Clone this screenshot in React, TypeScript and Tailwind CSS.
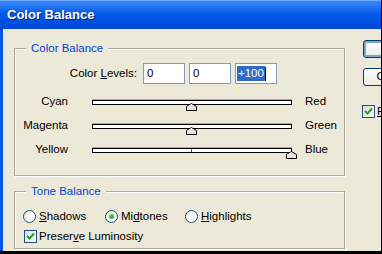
import React from 'react';

const sans = "font-['Liberation_Sans',Arial,sans-serif]";

interface SliderRowProps {
    left: string;
    right: string;
    value: number;
    tick?: boolean;
}

// thumb position is given in px from the left end of the track (0..200)
function SliderRow({ left, right, value, tick }: SliderRowProps) {
    return (
        <div className="flex items-center h-[24px]">
            <div className="w-[53px] text-right">{left}</div>
            <div className="relative ml-[24px] w-[200px] h-[5px] bg-white border border-black shadow-[0_-1px_0_#ACA899]">
                {tick && <div className="absolute left-[98px] top-0 w-px h-[3px] bg-[#555]" />}
                <svg
                    className="absolute top-[2px]"
                    style={{ left: value - 6 }}
                    width="11"
                    height="8"
                    viewBox="0 0 11 8">
                    <path d="M0.5 7.5 V3.5 L5.5 0.5 L10.5 3.5 V7.5 Z" fill="#E6E4DA" stroke="#000" />
                    <path d="M1.5 6.5 V4 L5.5 1.6" fill="none" stroke="#fff" />
                </svg>
            </div>
            <div className="ml-[13px]">{right}</div>
        </div>
    );
}

function Radio({ checked }: { checked?: boolean }) {
    return (
        <span className="flex items-center justify-center w-[13px] h-[13px] rounded-full border border-[#1C5180] bg-gradient-to-br from-[#DCDCD7] via-white to-[#F6F5F0]">
            {checked && (
                <span className="w-[5px] h-[5px] rounded-full bg-gradient-to-br from-[#55D051] to-[#21A121]" />
            )}
        </span>
    );
}

function Check() {
    return (
        <span className="flex items-center justify-center w-[13px] h-[13px] border border-[#1C5180] bg-gradient-to-br from-[#DCDCD7] to-white">
            <svg width="9" height="9" viewBox="0 0 9 9">
                <path d="M1 4 L3.5 6.5 L8 1.5" fill="none" stroke="#21A121" strokeWidth="2" />
            </svg>
        </span>
    );
}

function GroupBox({ title, className, children }: { title: string; className: string; children: React.ReactNode }) {
    return (
        <div className={`relative border border-[#ACA899] shadow-[inset_1px_1px_0_#fff,1px_1px_0_#fff] ${className}`}>
            <span className="absolute -top-[8px] left-[11px] px-[5px] bg-[#ECE9D8] text-[#0046D5] leading-[14px]">
                {title}
            </span>
            {children}
        </div>
    );
}

export default function App() {
    return (
        <div className={`relative w-[382px] h-[254px] overflow-hidden bg-black text-[11.5px] text-black ${sans}`}>
            <div className="flex flex-col w-[381px] h-[251px]">
                <div className="flex items-center h-[29px] pl-[7px] bg-gradient-to-b from-[#3C8CFA] via-[#0058E8] to-[#0048D8] shadow-[inset_0_1px_0_#6FA8FF]">
                    <span className="text-white font-bold text-[13px] [text-shadow:1px_1px_0_#0A246A]">
                        Color Balance
                    </span>
                </div>
                <div className="flex flex-1 overflow-hidden border-l-[3px] border-[#0055E5] bg-[#ECE9D8]">
                    <div className="shrink-0 pl-[11px] pt-[19px]">
                        <GroupBox title="Color Balance" className="w-[331px] h-[128px]">
                            <div className="flex items-center mt-[14px]">
                                <div className="w-[122px] text-right">
                                    Color <u>L</u>evels:
                                </div>
                                <div className="ml-[6px] flex gap-[4px]">
                                    <div className="w-[42px] h-[21px] border border-[#7F9DB9] bg-white pl-[3px] leading-[19px]">0</div>
                                    <div className="w-[42px] h-[21px] border border-[#7F9DB9] bg-white pl-[3px] leading-[19px]">0</div>
                                    <div className="flex items-center w-[42px] h-[21px] border border-[#7F9DB9] bg-white pl-px">
                                        <span className="bg-[#316AC5] text-white px-px leading-[15px]">+100</span>
                                        <span className="w-px h-[14px] bg-black" />
                                    </div>
                                </div>
                            </div>
                            <div className="mt-[6px]">
                                <SliderRow left="Cyan" right="Red" value={99} />
                                <SliderRow left="Magenta" right="Green" value={99} />
                                <SliderRow left="Yellow" right="Blue" value={199} tick />
                            </div>
                        </GroupBox>
                        <GroupBox title="Tone Balance" className="w-[331px] h-[58px] mt-[15px]">
                            <div className="flex items-center mt-[16px] pl-[8px]">
                                <div className="flex items-center gap-[3px] w-[82px]">
                                    <Radio />
                                    <span><u>S</u>hadows</span>
                                </div>
                                <div className="flex items-center gap-[3px] w-[80px]">
                                    <Radio checked />
                                    <span>Mi<u>d</u>tones</span>
                                </div>
                                <div className="flex items-center gap-[3px]">
                                    <Radio />
                                    <span><u>H</u>ighlights</span>
                                </div>
                            </div>
                            <div className="flex items-center gap-[2px] mt-[3px] pl-[9px]">
                                <Check />
                                <span>Preser<u>v</u>e Luminosity</span>
                            </div>
                        </GroupBox>
                    </div>
                    <div className="shrink-0 flex flex-col ml-[18px] pt-[11px]">
                        <div className="flex items-center justify-center w-[63px] h-[18px] rounded-[3px] border border-[#003C74] bg-gradient-to-b from-white to-[#ECEBE6] shadow-[inset_0_0_0_2px_#7DA2CE]">
                            OK
                        </div>
                        <div className="flex items-center justify-center w-[63px] h-[18px] mt-[10px] rounded-[3px] border border-[#003C74] bg-gradient-to-b from-white to-[#ECEBE6]">
                            Cancel
                        </div>
                        <div className="flex items-center gap-[2px] mt-[17px] -ml-px">
                            <Check />
                            <span><u>P</u>review</span>
                        </div>
                    </div>
                </div>
            </div>
        </div>
    );
}
